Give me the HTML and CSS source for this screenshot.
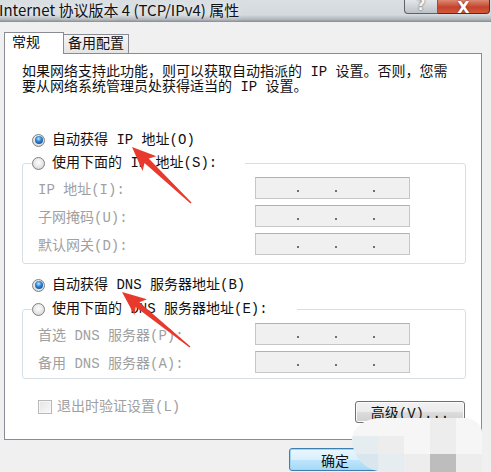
FILE: index.html
```html
<!DOCTYPE html>
<html lang="zh-CN">

<head>
    <meta charset="UTF-8">
    <meta name="viewport" content="width=device-width, initial-scale=1.0">
    <title>Internet 协议版本 4 (TCP/IPv4) 属性</title>
    <link rel="stylesheet" href="styles.css">
</head>

<body>
    <div class="titlebar">
        <span class="title">Internet 协议版本 4 (TCP/IPv4) 属性</span>
        <div class="caption-btns">
            <span class="cap-btn help"><span>?</span></span>
            <span class="cap-btn close"><span>X</span></span>
        </div>
    </div>

    <div class="tabs">
        <span class="tab active">常规</span>
        <span class="tab">备用配置</span>
    </div>

    <div class="panel">
        <p class="intro">如果网络支持此功能，则可以获取自动指派的 IP 设置。否则，您需<br>要从网络系统管理员处获得适当的 IP 设置。</p>

        <div class="option first">
            <span class="radio checked"></span>
            <span>自动获得 IP 地址(O)</span>
        </div>

        <fieldset class="group">
            <legend class="option legend-ip">
                <span class="radio"></span>
                <span>使用下面的 IP 地址(S):</span>
            </legend>
            <div class="fields">
                <label class="muted">IP 地址(I):</label>
                <div class="ip-box"><i></i><i></i><i></i></div>
                <label class="muted">子网掩码(U):</label>
                <div class="ip-box"><i></i><i></i><i></i></div>
                <label class="muted">默认网关(D):</label>
                <div class="ip-box"><i></i><i></i><i></i></div>
            </div>
        </fieldset>

        <div class="option dns-auto">
            <span class="radio checked"></span>
            <span>自动获得 DNS 服务器地址(B)</span>
        </div>

        <fieldset class="group group-dns">
            <legend class="option legend-dns">
                <span class="radio"></span>
                <span>使用下面的 DNS 服务器地址(E):</span>
            </legend>
            <div class="fields">
                <label class="muted">首选 DNS 服务器(P):</label>
                <div class="ip-box"><i></i><i></i><i></i></div>
                <label class="muted">备用 DNS 服务器(A):</label>
                <div class="ip-box"><i></i><i></i><i></i></div>
            </div>
        </fieldset>

        <div class="bottom-row">
            <label class="check muted"><span class="box"></span>退出时验证设置(L)</label>
            <button class="btn adv">高级(V)...</button>
        </div>
    </div>

    <div class="footer">
        <button class="btn default">确定</button>
        <button class="btn">取消</button>
    </div>

    <!-- blurred patch over the corner of the shot -->
    <div class="mosaic">
        <span class="s1"></span><span class="s1"></span><span class="s1"></span><span class="s2"></span><span class="s1"></span>
        <span class="s5"></span><span class="s2"></span><span class="s1"></span><span class="s2"></span><span class="s1"></span>
        <span class="s3"></span><span class="s5"></span><span class="s2"></span><span class="s4"></span><span class="s2"></span>
    </div>

    <svg class="marks" width="491" height="472" viewBox="0 0 491 472">
        <polygon points="132,147 156.4,156.3 148.7,158.6 191.5,202.5 190.5,203.5 144.5,163 142.6,170.9" />
        <polygon points="122,292 147,299.3 139.4,302.3 190.4,346.5 189.6,347.5 135.7,306.9 134.4,314.9" />
    </svg>
</body>

</html>
```

FILE: styles.css
```css
* {
    box-sizing: border-box;
}

body {
    margin: 0;
    width: 491px;
    height: 472px;
    overflow: hidden;
    position: relative;
    background-color: #f0f0f0;
    font-family: "Liberation Mono", "Noto Sans CJK SC", sans-serif;
    font-size: 14px;
    color: #111;
}

/* title bar */
.titlebar {
    height: 22px;
    display: flex;
    justify-content: space-between;
    align-items: flex-start;
    background: linear-gradient(to bottom, #dadfe4 0%, #d4d9de 68%, #b2b7bc 88%, #85898e 100%);
}

.title {
    font-family: "Noto Sans CJK SC", sans-serif;
    font-size: 15px;
    line-height: 20px;
    margin-left: -1px;
    color: #111;
    white-space: nowrap;
    text-shadow: 0 0 6px rgba(255, 255, 255, 0.9);
}

.caption-btns {
    display: flex;
    margin-right: 1px;
}

.cap-btn {
    height: 14px;
    overflow: hidden;
    display: flex;
    justify-content: center;
    align-items: flex-end;
    font-family: "DejaVu Sans", sans-serif;
    font-weight: bold;
    line-height: 16px;
}

.help {
    width: 34px;
    border: 1px solid #5c636a;
    border-top: none;
    border-radius: 0 0 0 4px;
    background: linear-gradient(#e4e7ea, #bcc2c8);
    color: #f4f6f8;
    font-size: 15px;
    text-shadow: 0 0 2px #444;
}

.close {
    width: 52px;
    border: 1px solid #5a2a22;
    border-left: none;
    border-top: none;
    border-radius: 0 0 4px 0;
    background: linear-gradient(#dc8a74, #c4432c 55%, #d4583c);
    color: #fff;
    font-size: 16px;
    text-shadow: 0 0 2px #6b1c10;
}

.close span {
    margin-bottom: -3px;
}

/* tabs */
.tabs {
    display: flex;
    align-items: flex-end;
    height: 21px;
    margin: 10px 0 0 4px;
}

.tab {
    width: 66px;
    height: 19px;
    margin-left: -1px;
    border: 1px solid #898c95;
    border-bottom: none;
    background: linear-gradient(#f5f5f5, #e4e4e4);
    text-align: center;
    line-height: 18px;
}

.tab.active {
    width: 60px;
    height: 22px;
    margin-left: 0;
    margin-bottom: -1px;
    padding-left: 7px;
    text-align: left;
    background: #fff;
    line-height: 21px;
    position: relative;
    z-index: 1;
}

/* page of the tab */
.panel {
    margin-left: 4px;
    width: 478px;
    background: #fff;
    border: 1px solid #898c95;
    padding-bottom: 16px;
}

.intro {
    margin: 11px 0 0 17px;
    line-height: 15px;
    white-space: nowrap;
}

.option {
    display: flex;
    align-items: center;
    gap: 7px;
    height: 16px;
    line-height: 16px;
    padding-left: 27px;
    white-space: nowrap;
}

.option.first {
    margin-top: 37px;
}

.option.dns-auto {
    margin-top: 13px;
}

.radio {
    width: 13px;
    height: 13px;
    flex-shrink: 0;
    border-radius: 50%;
    border: 1px solid #7f8081;
    background: radial-gradient(circle at 50% 40%, #fdfdfd 0, #e6e6e6 55%, #c4c4c4 100%);
    display: flex;
    align-items: center;
    justify-content: center;
}

.radio.checked::after {
    content: "";
    width: 8px;
    height: 8px;
    border-radius: 50%;
    background: radial-gradient(circle at 45% 35%, #bfe6ff 0, #2f86d6 40%, #0b3470 100%);
}

.group {
    margin: 7px 15px 0 17px;
    padding: 6px 0 8px 9px;
    border: 1px solid #d5dfe5;
    border-radius: 3px;
    min-width: 0;
}

.group-dns {
    margin-top: 8px;
    padding-bottom: 5px;
}

.group legend {
    padding: 0;
    margin: 0;
}

.legend-ip {
    width: 213px;
}

.legend-dns {
    width: 265px;
}

.fields {
    display: grid;
    grid-template-columns: 217px 155px;
    row-gap: 6px;
    align-items: center;
    padding-left: 6px;
}

.muted {
    color: #a0a0a0;
    white-space: nowrap;
}

.ip-box {
    height: 22px;
    border: 1px solid #c6c6c6;
    border-top-color: #afb1b5;
    background: #f0f0f0;
    display: flex;
    align-items: flex-end;
    gap: 36px;
    padding: 0 0 6px 41px;
}

.ip-box i {
    width: 2px;
    height: 2px;
    background: #707070;
}

.bottom-row {
    display: flex;
    justify-content: space-between;
    align-items: flex-start;
    margin: 21px 16px 0 33px;
}

.check {
    display: flex;
    align-items: center;
    gap: 5px;
    line-height: 14px;
}

.box {
    width: 14px;
    height: 14px;
    border: 1px solid #b9b9b9;
    background: linear-gradient(135deg, #e4e4e4, #f9f9f9);
    box-shadow: inset 0 0 0 1px #f6f6f6;
}

.btn {
    font-family: inherit;
    font-size: 14px;
    color: #111;
    height: 22px;
    padding: 0;
    border: 1px solid #707070;
    border-radius: 3px;
    background: linear-gradient(#f2f2f2 0, #ebebeb 50%, #dddddd 50%, #cfcfcf 100%);
    box-shadow: inset 0 0 0 1px #fbfbfb;
}

.adv {
    width: 110px;
    margin-top: 1px;
}

.footer {
    display: flex;
    justify-content: flex-end;
    gap: 8px;
    margin: 8px 10px 0 0;
}

.footer .btn {
    width: 92px;
    height: 23px;
}

.btn.default {
    border-color: #3c7fb1;
    background: linear-gradient(#eaf6fd 0, #d9f0fc 50%, #bee6fd 50%, #a7d9f5 100%);
    box-shadow: inset 0 0 0 1px #9fd6f5;
}

/* overlays on the screenshot */
.mosaic {
    position: absolute;
    left: 352px;
    top: 418px;
    width: 130px;
    height: 54px;
    display: grid;
    grid-template-columns: repeat(5, 26px);
    grid-template-rows: repeat(3, 18px);
    border-radius: 36px 22px 0 40px / 26px 18px 0 40px;
    overflow: hidden;
}

.s1 { background: #f6f6f6; }
.s2 { background: #ededed; }
.s3 { background: #d9e6ee; }
.s4 { background: #bdbdbd; }
.s5 { background: #e6edf1; }

.marks {
    position: absolute;
    left: 0;
    top: 0;
    pointer-events: none;
}

.marks polygon {
    fill: #e8392c;
}
```
